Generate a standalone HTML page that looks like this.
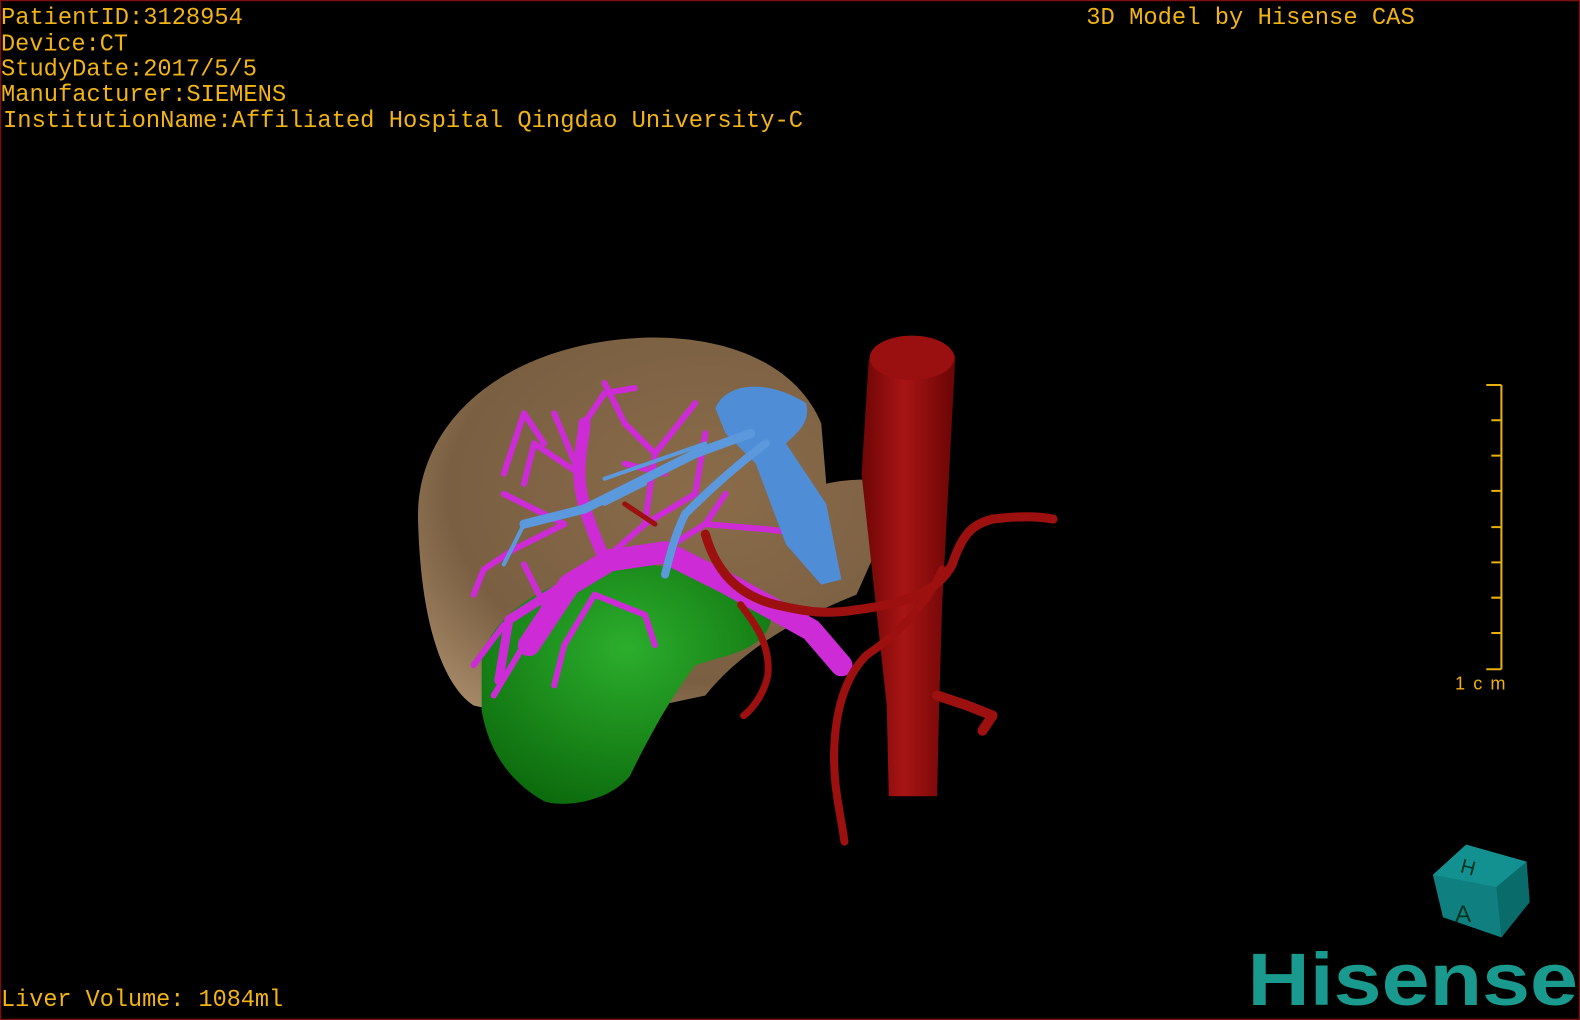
<!DOCTYPE html>
<html><head><meta charset="utf-8"><style>
html,body{margin:0;padding:0;background:#000;}
body{width:1580px;height:1020px;overflow:hidden;position:relative;}
svg{position:absolute;left:0;top:0;}
</style></head><body>
<svg width="1580" height="1020" viewBox="0 0 1568 1012" preserveAspectRatio="none" xmlns="http://www.w3.org/2000/svg">
<defs>
<radialGradient id="lv" cx="0.55" cy="0.4" r="0.7"><stop offset="0" stop-color="#8a6c4a"/><stop offset="0.7" stop-color="#7a5f42"/><stop offset="1" stop-color="#a48866"/></radialGradient>
<radialGradient id="gr" cx="0.5" cy="0.35" r="0.7"><stop offset="0" stop-color="#2cae2c"/><stop offset="1" stop-color="#0c6a0c"/></radialGradient>
<linearGradient id="rd" x1="0" x2="1"><stop offset="0" stop-color="#6e0606"/><stop offset="0.45" stop-color="#a81414"/><stop offset="1" stop-color="#6a0505"/></linearGradient>
</defs>
<rect x="0" y="0" width="1568" height="1012" fill="#000"/>
<rect x="0.5" y="0.5" width="1567" height="1011" fill="none" stroke="#7a1010" stroke-width="1.5"/>
<!-- liver -->
<path d="M415 520 C410 420 500 340 640 335 C720 333 790 360 815 420 L820 480 C860 470 920 480 938 490 C935 520 900 540 870 545 L850 590 C800 610 740 640 700 690 L560 720 L470 700 C440 680 418 620 415 520 Z" fill="url(#lv)"/>
<!-- green -->
<path d="M478 650 C495 600 560 565 640 560 C700 565 755 585 765 615 C760 645 720 650 690 660 C660 700 640 740 625 770 C605 795 560 802 540 795 C505 775 485 745 478 705 Z" fill="url(#gr)"/>
<!-- magenta branches -->
<g stroke="#cc2bd6" fill="none" stroke-linecap="round" stroke-linejoin="round">
<path d="M835 660 L805 625 L720 578 L660 548 L605 556 L565 580 L525 640" stroke-width="22"/>
<path d="M600 555 C585 520 575 495 575 470 C575 445 580 430 580 420" stroke-width="12"/>
<path d="M560 580 L505 615 L495 675" stroke-width="9"/>
<g stroke-width="6">
<path d="M575 470 L550 410 M580 420 L600 390 L630 385 M575 470 L530 440 L520 480 M560 520 L500 490 M560 520 L510 545 L480 565 M600 555 L640 520 L690 490 M660 545 L700 520 L760 525 L800 530 M700 520 L720 490 M640 520 L650 450 L690 400 M650 450 L620 420 L600 380 M520 640 L490 690 M540 600 L520 560 M590 590 L640 610 L650 640 M590 590 L560 640 L550 680 M620 460 L660 470 M540 440 L520 410 L500 470 M480 565 L470 590 M690 490 L700 430 M500 620 L470 660"/>
</g>
</g>
<!-- blue -->
<path d="M710 405 C720 380 760 375 800 400 C805 420 790 430 780 440 L820 500 L835 575 L815 580 L780 540 L750 460 L720 430 Z" fill="#4f8ed6"/>
<g stroke="#5b98dc" fill="none" stroke-linecap="round">
<path d="M745 430 L690 450 L630 480 L580 505 L520 520" stroke-width="9"/>
<path d="M760 440 C720 470 690 500 680 510 C670 530 665 550 660 570" stroke-width="8"/>
<path d="M700 440 L600 475 M640 480 L600 500 M520 520 L500 560" stroke-width="4"/>
</g>
<!-- IVC -->
<path d="M862 360 C865 330 945 330 948 355 L935 600 L932 700 L930 790 L882 790 L880 700 L855 470 Z" fill="url(#rd)"/>
<ellipse cx="905" cy="355" rx="42" ry="22" fill="#9a1010"/>
<!-- arteries -->
<g stroke="#9c1010" fill="none" stroke-linecap="round" stroke-linejoin="round">
<path d="M700 530 C710 565 730 590 770 600 C800 607 820 610 850 605 C890 600 930 590 945 560 C955 530 965 520 985 515 C1010 512 1030 512 1045 515" stroke-width="9"/>
<path d="M935 565 C920 600 890 630 860 650 C840 670 830 700 828 740 C826 780 835 810 838 835" stroke-width="8"/>
<path d="M735 600 C750 620 765 640 762 670 C758 690 745 705 738 710" stroke-width="7"/>
<path d="M930 690 L960 700 L985 710 L975 725" stroke-width="10"/>
<path d="M620 500 L650 520" stroke-width="5"/>
</g>
<!-- scale bar -->
<g stroke="#e8b010" stroke-width="2" fill="none">
<path d="M1490 382 V664 M1475 382 H1490 M1475 664 H1490 M1480 417 H1490 M1480 452 H1490 M1480 487 H1490 M1480 523 H1490 M1480 558 H1490 M1480 593 H1490 M1480 628 H1490"/>
</g>
<text x="1444" y="684" font-family="Liberation Sans, sans-serif" font-size="18" fill="#f0b010" textLength="50" lengthAdjust="spacing">1cm</text>
<!-- cube -->
<path d="M1422 868 L1455 838 L1515 855 L1518 895 L1490 930 L1432 910 Z" fill="#0f7f7f"/>
<path d="M1422 868 L1455 838 L1515 855 L1485 880 Z" fill="#139090"/>
<path d="M1485 880 L1515 855 L1518 895 L1490 930 Z" fill="#0a6b6b"/>
<text x="1450" y="868" font-family="Liberation Sans, sans-serif" font-size="20" fill="#032" transform="rotate(15 1460 860)">H</text>
<text x="1444" y="915" font-family="Liberation Sans, sans-serif" font-size="24" fill="#032">A</text>
<text x="1238" y="997" font-family="Liberation Sans, sans-serif" font-weight="bold" font-size="74" fill="#1a9a8e" textLength="328" lengthAdjust="spacingAndGlyphs">Hisense</text>
<g font-family="Liberation Mono, monospace" font-size="23.5" fill="#f2b414">
<text x="1" y="24" textLength="240" lengthAdjust="spacingAndGlyphs">PatientID:3128954</text>
<text x="1" y="50" textLength="126" lengthAdjust="spacingAndGlyphs">Device:CT</text>
<text x="1" y="75" textLength="254" lengthAdjust="spacingAndGlyphs">StudyDate:2017/5/5</text>
<text x="1" y="100" textLength="283" lengthAdjust="spacingAndGlyphs">Manufacturer:SIEMENS</text>
<text x="3" y="126" textLength="794" lengthAdjust="spacingAndGlyphs">InstitutionName:Affiliated Hospital Qingdao University-C</text>
<text x="1078" y="24" textLength="326" lengthAdjust="spacingAndGlyphs">3D Model by Hisense CAS</text>
<text x="1" y="998" textLength="280" lengthAdjust="spacingAndGlyphs">Liver Volume: 1084ml</text>
</g>
</svg>
</body></html>
